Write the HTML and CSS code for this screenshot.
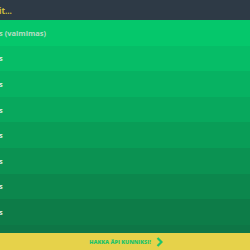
FILE: index.html
```html
<!DOCTYPE html>
<html>
<head>
  <meta charset="UTF-8">
  <title>Tasot</title>
  <link rel="stylesheet" href="styles.css">
</head>
<body>
  <div class="screen">
    <div class="header"><span class="cut">it...</span></div>

    <div class="levels">
      <div class="level l1"><span class="cut done">s (valmimas)</span></div>
      <div class="level l2"><span class="cut">s</span></div>
      <div class="level l3"><span class="cut">s</span></div>
      <div class="level l4"><span class="cut">s</span></div>
      <div class="level l5"><span class="cut">s</span></div>
      <div class="level l6"><span class="cut">s</span></div>
      <div class="level l7"><span class="cut">s</span></div>
      <div class="level l8"><span class="cut">s</span></div>
    </div>

    <div class="footer">
      <span>HAKKA ÄPI KUNNIKSI!</span>
      <svg width="7" height="10" viewBox="0 0 7 10">
        <path d="M1.5 1 L5.5 5 L1.5 9" fill="none" stroke="#1fc46b" stroke-width="2.2"/>
      </svg>
    </div>
  </div>
</body>
</html>
```

FILE: styles.css
```css
body {
  margin: 0;
  font-family: "Open Sans", Arial, sans-serif;
  background-color: #0e7646;
}
.screen {
  width: 250px;
  height: 250px;
  display: flex;
  flex-direction: column;
  overflow: hidden;
}
.header {
  height: 20px;
  background-color: #2e3a46;
  color: #d2c23c;
  font-size: 8px;
  font-weight: bold;
  display: flex;
  align-items: center;
}
.cut {
  margin-left: -1px;
  white-space: nowrap;
}
.levels {
  flex: 1;
  background-color: #0e7646;
}
.level {
  height: 25.6px;
  display: flex;
  align-items: center;
  color: #dcece2;
  font-size: 7.5px;
  font-weight: bold;
}
.level .done {
  color: #b8dcc4;
}
.l1 { background-color: #05c76b; }
.l2 { background-color: #06bd67; }
.l3 { background-color: #07b262; }
.l4 { background-color: #08a85d; }
.l5 { background-color: #099d57; }
.l6 { background-color: #0b9252; }
.l7 { background-color: #0c874d; }
.l8 { background-color: #0d7c48; }
.footer {
  height: 17px;
  background-color: #e6d24a;
  color: #1fc46b;
  font-size: 5.5px;
  font-weight: 800;
  display: flex;
  align-items: center;
  justify-content: center;
  gap: 5px;
  padding-left: 2px;
}
```
